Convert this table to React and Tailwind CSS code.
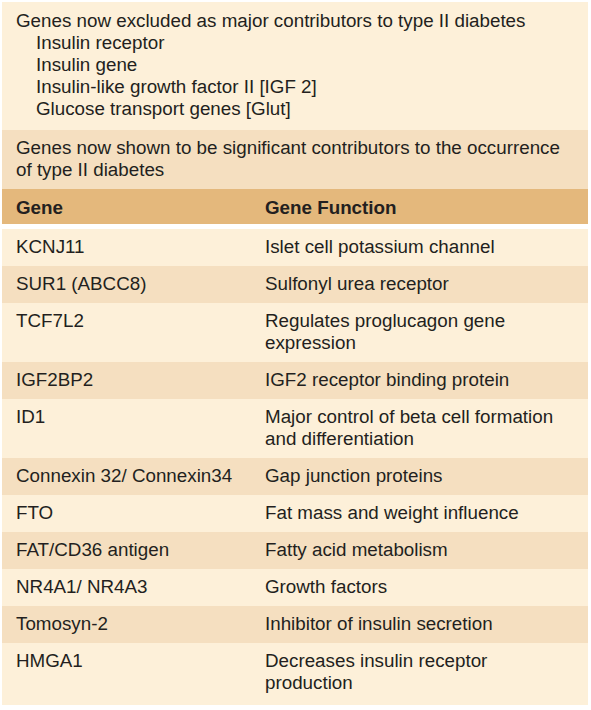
import React from "react";

const rows = [
  ["KCNJ11", "Islet cell potassium channel"],
  ["SUR1 (ABCC8)", "Sulfonyl urea receptor"],
  ["TCF7L2", "Regulates proglucagon gene expression"],
  ["IGF2BP2", "IGF2 receptor binding protein"],
  ["ID1", "Major control of beta cell formation and differentiation"],
  ["Connexin 32/ Connexin34", "Gap junction proteins"],
  ["FTO", "Fat mass and weight influence"],
  ["FAT/CD36 antigen", "Fatty acid metabolism"],
  ["NR4A1/ NR4A3", "Growth factors"],
  ["Tomosyn-2", "Inhibitor of insulin secretion"],
  ["HMGA1", "Decreases insulin receptor production"],
];

export default function App() {
  return (
    <div
      className="w-[591px] h-[710px] bg-white pt-[2px] pl-[2px] pr-[3px] text-[#231f20] text-[18.8px] leading-[22px]"
      style={{ fontFamily: '"Liberation Sans", Arial, sans-serif' }}
    >
      <div className="bg-[#fdf0d9] pl-[14px] pt-[8px] pb-[10px]">
        <div>Genes now excluded as major contributors to type II diabetes</div>
        <div className="pl-[20px]">
          <div>Insulin receptor</div>
          <div>Insulin gene</div>
          <div>Insulin-like growth factor II [IGF 2]</div>
          <div>Glucose transport genes [Glut]</div>
        </div>
      </div>
      <div className="bg-[#f5dfc0] pl-[14px] pt-[7px] pb-[8px] whitespace-nowrap">
        <div>Genes now shown to be significant contributors to the occurrence</div>
        <div>of type II diabetes</div>
      </div>
      <div className="bg-[#e4b87c] flex font-bold pt-[8px] pb-[5px]">
        <div className="w-[263px] pl-[14px] shrink-0">Gene</div>
        <div className="flex-1">Gene Function</div>
      </div>
      <div className="h-[5px] bg-white" />
      {rows.map(([g, f], i) => (
        <div
          key={g}
          className={`flex pt-[7px] ${i === rows.length - 1 ? "pb-[11px]" : "pb-[8px]"} ${i % 2 === 0 ? "bg-[#fdf0d9]" : "bg-[#f5dfc0]"}`}
        >
          <div className="w-[263px] pl-[14px] shrink-0">{g}</div>
          <div className="w-[305px]">{f}</div>
        </div>
      ))}
    </div>
  );
}
